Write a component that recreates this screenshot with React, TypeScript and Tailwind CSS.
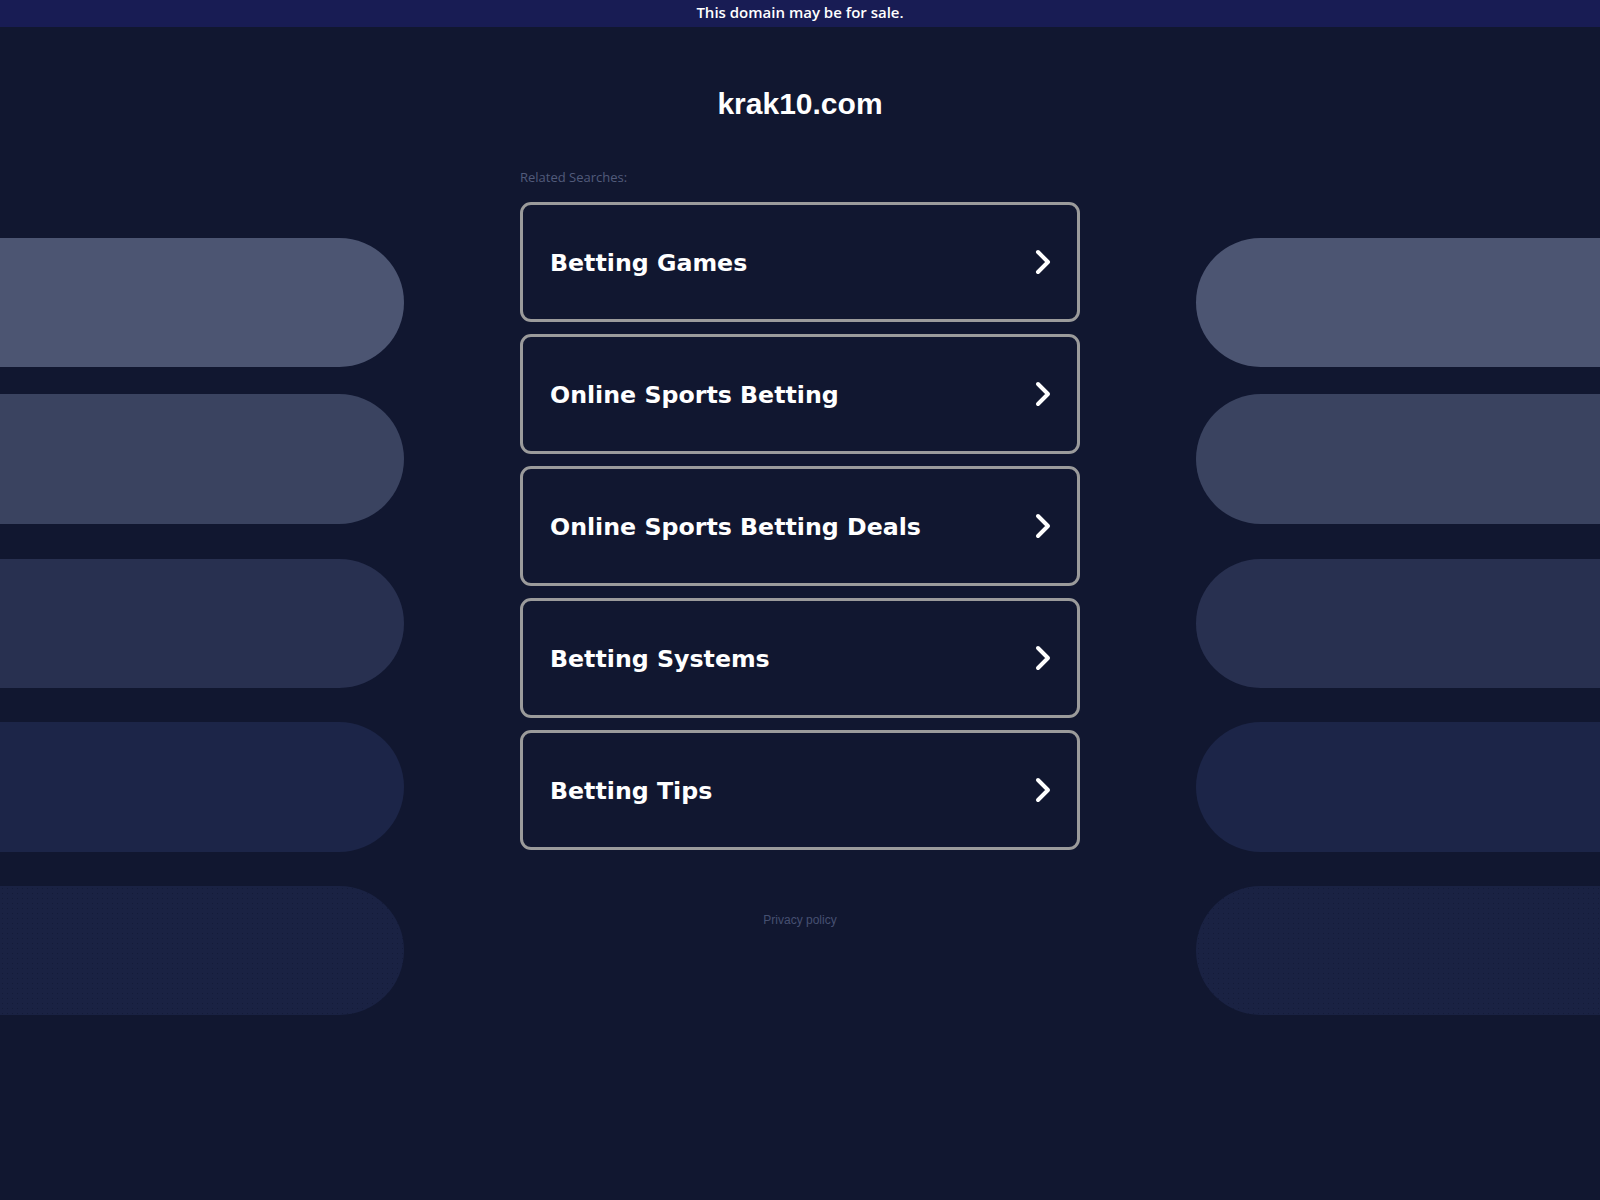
const searches = [
  "Betting Games",
  "Online Sports Betting",
  "Online Sports Betting Deals",
  "Betting Systems",
  "Betting Tips",
];

// decorative side bars, top to bottom
const bars = [
  { cls: "mt-[211px] h-[129px] bg-[#4c5572]" },
  { cls: "mt-[27px] h-[130px] bg-[#3a4360]" },
  { cls: "mt-[35px] h-[129px] bg-[#283050]" },
  {
    cls: "mt-[34px] h-[130px] bg-[#1c2548] bg-[radial-gradient(#222d56_0.7px,transparent_0.7px)] bg-[length:4px_4px]",
  },
  {
    cls: "mt-[34px] h-[129px] bg-[#1a2243] bg-[radial-gradient(#141b38_0.8px,transparent_0.8px)] bg-[length:5px_5px]",
  },
];

const SideBars = ({ side }: { side: "left" | "right" }) => (
  <div className="flex flex-col">
    {bars.map((b, i) => (
      <div
        key={i}
        className={`${b.cls} ${side === "left" ? "rounded-r-full" : "rounded-l-full"}`}
      />
    ))}
  </div>
);

const Chevron = () => (
  <svg width="18" height="26" viewBox="0 0 18 26" fill="none">
    <polyline
      points="4,3 14,13 4,23"
      stroke="white"
      strokeWidth="4"
      strokeLinecap="round"
      strokeLinejoin="round"
    />
  </svg>
);

export default function App() {
  return (
    <div className="min-h-[1200px] bg-[#111730] font-['Open_Sans',sans-serif]">
      <div className="h-[27px] bg-[#181c54] flex items-center justify-center text-[15px] leading-[20px] pb-[4px] font-semibold text-white">
        This domain may be for sale.
      </div>

      <div className="grid grid-cols-[404px_1fr_404px]">
        <SideBars side="left" />

        <div className="flex flex-col items-center">
          <h1 className="mt-[60px] h-[34px] leading-[34px] text-[30px] font-bold text-white font-['Liberation_Sans',Arial,sans-serif]">
            krak10.com
          </h1>

          <div className="w-[560px] mt-[48px]">
            <p className="h-[16px] leading-[16px] text-[13px] text-[#525b7b]">
              Related Searches:
            </p>

            <div className="mt-[17px] flex flex-col gap-[12px]">
              {searches.map((s) => (
                <a
                  key={s}
                  href="#"
                  className="h-[120px] border-[3px] border-[#9b9b9b] rounded-[11px] flex items-center justify-between pl-[27px] pr-[25px]"
                >
                  <span className="pt-[3px] text-[23.7px] font-bold text-white font-['DejaVu_Sans',sans-serif]">
                    {s}
                  </span>
                  <Chevron />
                </a>
              ))}
            </div>
          </div>

          <a
            href="#"
            className="mt-[63px] text-[12px] leading-[14px] text-[#465070] font-['Liberation_Sans',Arial,sans-serif]"
          >
            Privacy policy
          </a>
        </div>

        <SideBars side="right" />
      </div>
    </div>
  );
}
